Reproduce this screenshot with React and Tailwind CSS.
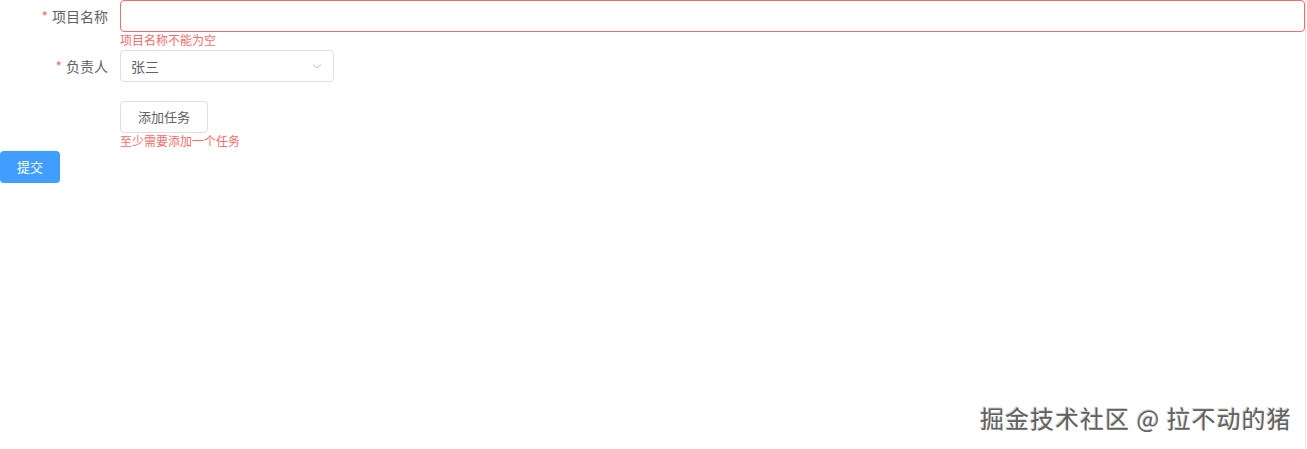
import React from "react";

export default function App() {
  const font = { fontFamily: '"Noto Sans CJK SC", "Noto Sans", sans-serif' };
  return (
    <div className="relative w-[1307px] h-[449px] bg-white overflow-hidden" style={font}>
      <div className="absolute right-[1px] top-0 bottom-0 w-px bg-[#e4e4e4]" />
      <div className="flex flex-col">
        {/* row 1 */}
        <div className="flex h-[32px]">
          <div className="w-[120px] pr-3 flex items-center justify-end text-[14px] text-[#606266]">
            <span className="text-[#f56c6c] mr-1">*</span>项目名称
          </div>
          <div className="relative w-[1185px]">
            <div className="h-[32px] border border-[#f56c6c] rounded-[4px]" />
            <div className="absolute left-0 top-[32px] text-[12px] leading-[16px] text-[#f56c6c]">项目名称不能为空</div>
          </div>
        </div>
        {/* row 2 */}
        <div className="flex h-[32px] mt-[18px]">
          <div className="w-[120px] pr-3 flex items-center justify-end text-[14px] text-[#606266]">
            <span className="text-[#f56c6c] mr-1">*</span>负责人
          </div>
          <div className="w-[214px] h-[32px] border border-[#dcdfe6] rounded-[4px] flex items-center justify-between pl-[10px] pr-[10px] text-[14px] text-[#606266]">
            <span>张三</span>
            <svg width="12" height="12" viewBox="0 0 12 12" fill="none">
              <path d="M2 4.5 L6 8 L10 4.5" stroke="#c0c4cc" strokeWidth="1" />
            </svg>
          </div>
        </div>
        {/* row 3 */}
        <div className="flex mt-[19px]">
          <div className="w-[120px]" />
          <div className="relative">
            <button className="h-[32px] w-[88px] border border-[#dcdfe6] rounded-[4px] bg-white text-[13px] text-[#606266] flex items-center justify-center">
              添加任务
            </button>
            <div className="absolute left-0 top-[32px] whitespace-nowrap text-[12px] leading-[16px] text-[#f56c6c]">至少需要添加一个任务</div>
          </div>
        </div>
        {/* submit */}
        <div className="mt-[18px]">
          <button className="h-[32px] w-[60px] rounded-[4px] bg-[#409eff] text-white text-[13px] flex items-center justify-center">
            提交
          </button>
        </div>
      </div>
      <div
        className="absolute left-[980px] top-[401px] text-[24px] leading-[34px] tracking-[1px] text-[#606060] whitespace-nowrap"
        style={{ textShadow: "1px 1px 0 #ffffff, -1px -1px 0 #cfcfcf" }}
      >
        掘金技术社区 @ 拉不动的猪
      </div>
    </div>
  );
}
